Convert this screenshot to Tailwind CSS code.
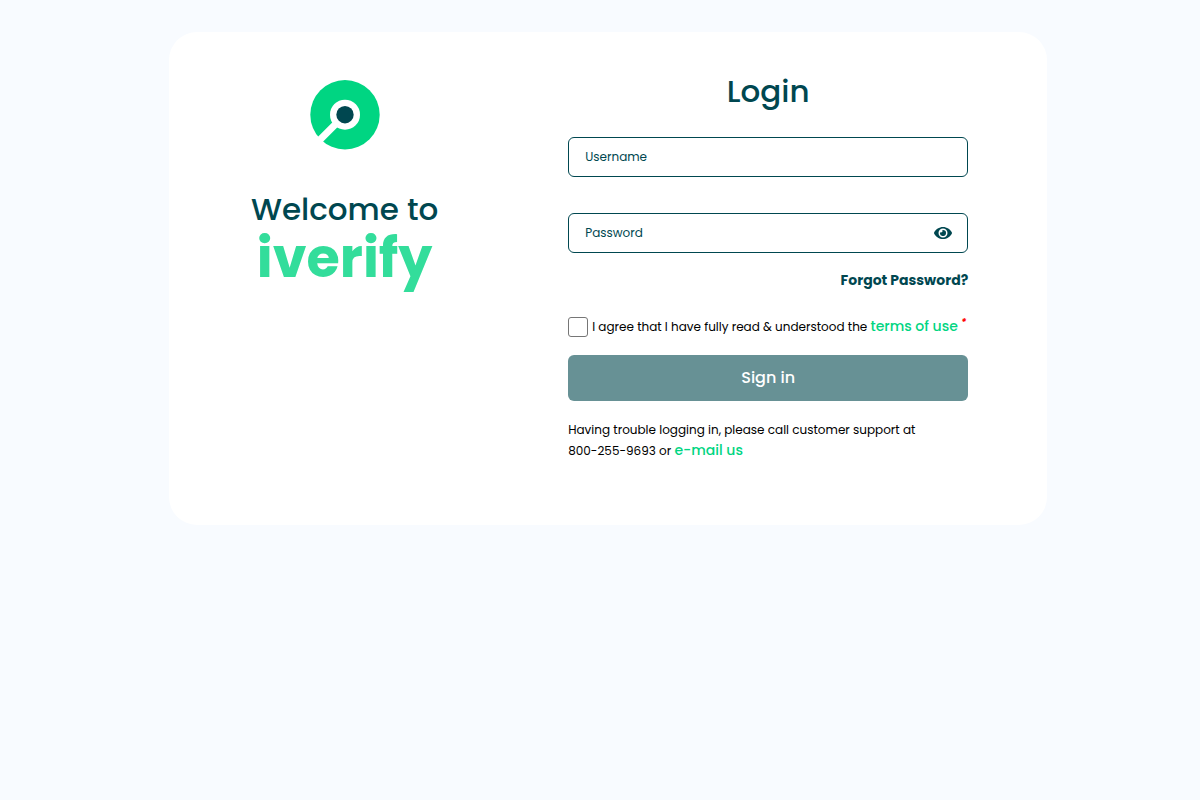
<!DOCTYPE html>
<html lang="en">
<head>
    <meta charset="UTF-8">
    <meta name="viewport" content="width=device-width, initial-scale=1.0">
    <title>iverify - Login</title>
    <script src="https://cdn.jsdelivr.net/npm/@tailwindcss/browser@4"></script>
</head>
<body class="min-h-screen bg-[#f8fbff] pt-8 pl-4 font-['Poppins','Inter',sans-serif] text-[#004750]">
    <main class="mx-auto flex w-full max-w-[878px] rounded-[28px] bg-white pt-12 pb-16">
        <!-- Brand -->
        <section class="flex w-2/5 flex-col items-center">
            <svg class="size-[70px]" viewBox="0 0 70 70" role="img" aria-label="iverify logo">
                <circle cx="35" cy="34.7" r="34.7" fill="#00d582" />
                <path d="M35 34.7L0 69.7" stroke="#fff" stroke-width="7" />
                <circle cx="35" cy="34.7" r="15" fill="#fff" />
                <circle cx="35" cy="34.7" r="8.7" fill="#004750" />
            </svg>
            <h1 class="mt-10 text-center">
                <span class="block text-[31px] leading-[38px] font-medium">Welcome to</span>
                <span class="block text-[54px] leading-[60px] font-bold text-[#33dd9b]">iverify</span>
            </h1>
        </section>

        <!-- Login form -->
        <section class="w-3/5 px-12">
            <form class="max-w-[400px]">
                <h2 class="text-center text-[31px] leading-[22px] font-medium">Login</h2>

                <div class="relative mt-[35px]">
                    <input id="username" type="text" placeholder=" " class="peer block h-10 w-full rounded-md border border-[#004750] px-4 text-xs" />
                    <label for="username" class="pointer-events-none absolute top-3 left-[17px] hidden text-xs text-[#004750] peer-placeholder-shown:block">Username</label>
                </div>

                <div class="relative mt-9">
                    <input id="password" type="password" placeholder=" " class="peer block h-10 w-full rounded-md border border-[#004750] pr-12 pl-4 text-xs" />
                    <label for="password" class="pointer-events-none absolute top-3 left-[17px] hidden text-xs text-[#004750] peer-placeholder-shown:block">Password</label>
                    <button id="togglePassword" type="button" aria-label="Show password" class="absolute inset-y-0 right-4 flex items-center">
                        <svg class="h-4 w-[18px]" viewBox="0 0 576 512" fill="currentColor">
                            <path d="M572.52 241.4C518.29 135.59 410.93 64 288 64S57.68 135.64 3.48 241.41a32.35 32.35 0 0 0 0 29.19C57.71 376.41 165.07 448 288 448s230.32-71.64 284.52-177.41a32.35 32.35 0 0 0 0-29.19zM288 400a144 144 0 1 1 144-144 143.93 143.93 0 0 1-144 144zm0-240a95.31 95.31 0 0 0-25.31 3.79 47.85 47.85 0 0 1-66.9 66.9A95.78 95.78 0 1 0 288 160z" />
                        </svg>
                    </button>
                </div>

                <div class="mt-4 text-right text-sm leading-[22px] font-bold">
                    <a href="#">Forgot Password?</a>
                </div>

                <div class="mt-[26px] flex h-5 items-center gap-1 text-xs whitespace-nowrap text-black">
                    <input id="agree" type="checkbox" class="size-5 shrink-0 appearance-none rounded-[3px] border border-[#767676] checked:bg-[#004750]" />
                    <label for="agree" class="pb-0.5">I agree that I have fully read &amp; understood the
                        <a href="#" class="text-sm font-medium text-[#00d582]">terms of use</a>
                        <sup class="text-[10px] font-bold text-[#ff0000] italic">*</sup>
                    </label>
                </div>

                <button type="submit" class="mt-[18px] h-[46px] w-full rounded-md bg-[#679195] text-base font-medium text-white">Sign in</button>

                <p class="mt-[18px] text-xs leading-[21px] text-black">
                    Having trouble logging in, please call customer support at<br>
                    800-255-9693 or <a href="#" class="text-sm leading-[21px] font-medium text-[#00d582]">e-mail us</a>
                </p>
            </form>
        </section>
    </main>

    <script>
        const password = document.getElementById('password');

        document.getElementById('togglePassword').addEventListener('click', () => {
            password.type = password.type === 'password' ? 'text' : 'password';
        });
    </script>
</body>
</html>
